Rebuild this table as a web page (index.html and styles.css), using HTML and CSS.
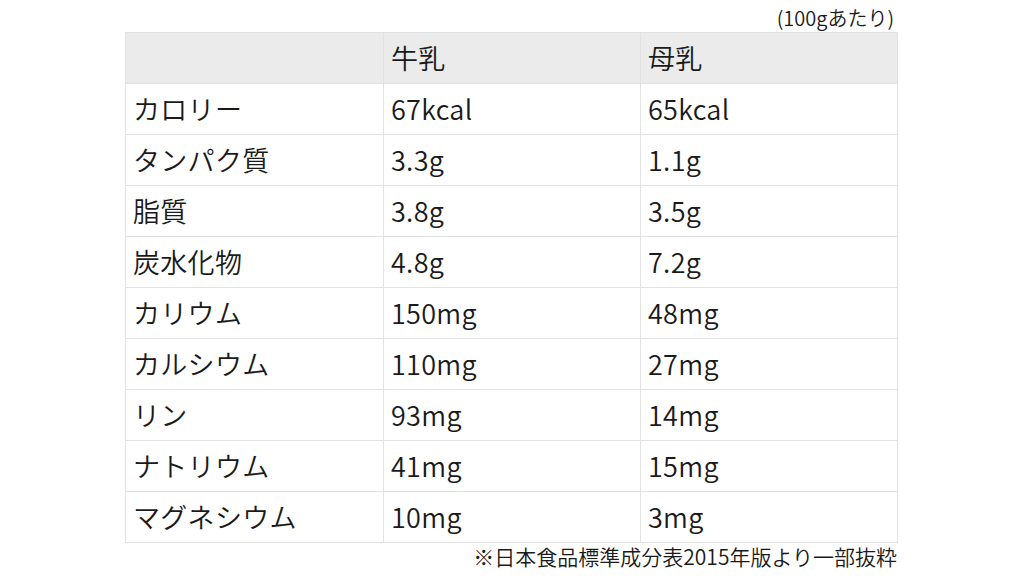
FILE: index.html
```html
<!DOCTYPE html>
<html lang="ja">
<head>
<meta charset="utf-8">
<link rel="stylesheet" href="styles.css">
</head>
<body>
<div class="wrap">
  <div class="unit">(100gあたり)</div>
  <table class="tbl">
    <thead>
      <tr><th></th><th>牛乳</th><th>母乳</th></tr>
    </thead>
    <tbody>
      <tr><td>カロリー</td><td>67kcal</td><td>65kcal</td></tr>
      <tr><td>タンパク質</td><td>3.3g</td><td>1.1g</td></tr>
      <tr><td>脂質</td><td>3.8g</td><td>3.5g</td></tr>
      <tr><td>炭水化物</td><td>4.8g</td><td>7.2g</td></tr>
      <tr><td>カリウム</td><td>150mg</td><td>48mg</td></tr>
      <tr><td>カルシウム</td><td>110mg</td><td>27mg</td></tr>
      <tr><td>リン</td><td>93mg</td><td>14mg</td></tr>
      <tr><td>ナトリウム</td><td>41mg</td><td>15mg</td></tr>
      <tr><td>マグネシウム</td><td>10mg</td><td>3mg</td></tr>
    </tbody>
  </table>
  <div class="note">※日本食品標準成分表2015年版より一部抜粋</div>
</div>
</body>
</html>
```
FILE: styles.css
```css
html, body {
  margin: 0;
  padding: 0;
  background: #ffffff;
}
body {
  font-family: "Noto Sans CJK JP", "Noto Sans", sans-serif;
  color: #1a1a1a;
}
.wrap {
  width: 773px;
  margin-left: 125px;
  padding-top: 4px;
}
.unit {
  text-align: right;
  font-size: 20px;
  font-weight: 350;
  line-height: 28px;
  height: 28px;
  padding-right: 4px;
}
.tbl {
  width: 773px;
  border-collapse: collapse;
  table-layout: fixed;
}
.tbl th, .tbl td {
  border: 1px solid #e2e2e2;
  height: 50px;
  padding: 0 0 0 7px;
  text-align: left;
  font-weight: 350;
  font-size: 27px;
  line-height: 30px;
  letter-spacing: 0.3px;
  vertical-align: middle;
}
.tbl th:nth-child(1) { width: 250px; }
.tbl th:nth-child(2) { width: 249px; }
.tbl thead th {
  background: #ebebeb;
}
.note {
  text-align: right;
  font-size: 21px;
  font-weight: 350;
  line-height: 26px;
  padding-right: 1px;
}
```
